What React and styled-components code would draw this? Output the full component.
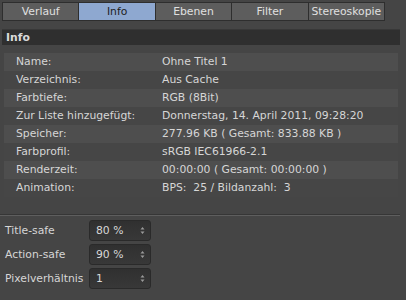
import React from 'react'
import styled, {createGlobalStyle} from 'styled-components'

const Global = createGlobalStyle`
	html, body {
		margin: 0;
		background: #454545;
	}
	body {
		font-family: "DejaVu Sans", "Liberation Sans", sans-serif;
		font-size: 10.8px;
		color: #d6d6d6;
	}
`

const Page = styled.div`
	width: 406px;
	height: 300px;
	overflow: hidden;
	background: #454545;
	padding-top: 2px;
	box-sizing: border-box;
`

const Tabs = styled.div`
	display: flex;
	margin-left: 2px;
	width: 383px;
`

const Tab = styled.div`
	flex: 1;
	height: 17px;
	line-height: 17px;
	text-align: center;
	border: 1px solid #2e2e2e;
	margin-left: -1px;
	background: ${p => p.$active ? '#8ea8d0' : '#5d5d5d'};
	color: ${p => p.$active ? '#1e1e1e' : '#e0e0e0'};
	&:first-child { margin-left: 0; }
`

const Header = styled.div`
	margin: 8px 6px 0 2px;
	height: 15px;
	line-height: 15px;
	background: #2f2f2f;
	border-top: 1px solid #383838;
	padding-left: 4px;
	font-weight: bold;
	color: #dadada;
`

const Table = styled.div`
	margin: 8px 8px 0 4px;
	display: flex;
	flex-direction: column;
`

const Row = styled.div`
	display: grid;
	grid-template-columns: 146px 1fr;
	height: 18px;
	line-height: 18px;
	padding-left: 12px;
	background: ${p => p.$odd ? '#4e4e4e' : '#464646'};
`

const Divider = styled.div`
	margin: 17px 6px 0 0;
	height: 1px;
	background: #5e5e5e;
	border-top: 1px solid #363636;
`

const Form = styled.div`
	margin-top: 4px;
	display: flex;
	flex-direction: column;
	gap: 3px;
	padding-left: 5px;
`

const Field = styled.div`
	display: flex;
	align-items: center;
	height: 21px;
`

const Label = styled.div`
	width: 84px;
`

const Spin = styled.div`
	width: 62px;
	height: 21px;
	box-sizing: border-box;
	background: linear-gradient(#303030, #383838);
	border: 1px solid #2a2a2a;
	border-radius: 3px;
	display: flex;
	align-items: center;
	justify-content: space-between;
	padding: 0 5px 0 6px;
	color: #d8d8d8;
`

const Arrows = () => (
	<svg width="5" height="9" viewBox="0 0 5 9">
		<path d="M0.5 3.5 L2.5 1 L4.5 3.5 Z M0.5 5.5 L2.5 8 L4.5 5.5 Z" fill="#9a9a9a"/>
	</svg>
)

const rows = [
	['Name:', 'Ohne Titel 1'],
	['Verzeichnis:', 'Aus Cache'],
	['Farbtiefe:', 'RGB (8Bit)'],
	['Zur Liste hinzugefügt:', 'Donnerstag, 14. April 2011, 09:28:20'],
	['Speicher:', '277.96 KB ( Gesamt: 833.88 KB )'],
	['Farbprofil:', 'sRGB IEC61966-2.1'],
	['Renderzeit:', '00:00:00 ( Gesamt: 00:00:00 )'],
	['Animation:', 'BPS:  25 / Bildanzahl:  3'],
]

export default function App() {
	return (
		<Page>
			<Global/>
			<Tabs>
				<Tab>Verlauf</Tab>
				<Tab $active>Info</Tab>
				<Tab>Ebenen</Tab>
				<Tab>Filter</Tab>
				<Tab>Stereoskopie</Tab>
			</Tabs>
			<Header>Info</Header>
			<Table>
				{rows.map(([k, v], i) => (
					<Row key={k} $odd={i % 2 === 0}>
						<span>{k}</span>
						<span style={{whiteSpace: 'pre'}}>{v}</span>
					</Row>
				))}
			</Table>
			<Divider/>
			<Form>
				<Field><Label>Title-safe</Label><Spin>80 %<Arrows/></Spin></Field>
				<Field><Label>Action-safe</Label><Spin>90 %<Arrows/></Spin></Field>
				<Field><Label>Pixelverhältnis</Label><Spin>1<Arrows/></Spin></Field>
			</Form>
		</Page>
	)
}
